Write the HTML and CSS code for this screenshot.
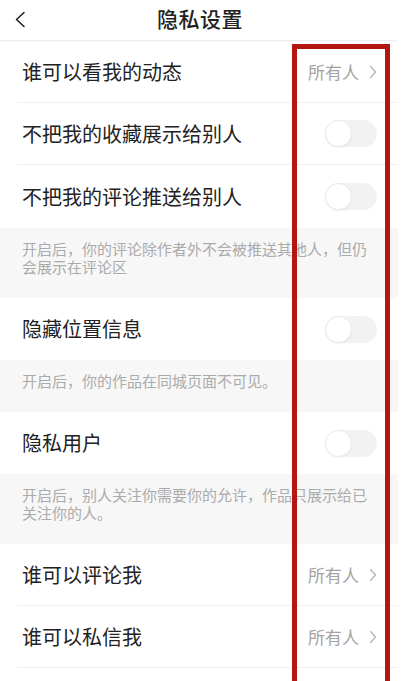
FILE: index.html
```html
<!DOCTYPE html>
<html lang="zh-CN">
<head>
<meta charset="utf-8">
<title>隐私设置</title>
<link rel="stylesheet" href="styles.css">
</head>
<body>
<div class="page">
  <header class="header">
    <span class="back">
      <svg width="12" height="17" viewBox="0 0 12 17"><polyline points="10,1.5 2.5,8.5 10,15.5" fill="none" stroke="#222" stroke-width="1.6" stroke-linecap="round" stroke-linejoin="round"/></svg>
    </span>
    <h1 class="title">隐私设置</h1>
  </header>

  <div class="row divided">
    <span class="label">谁可以看我的动态</span>
    <span class="value">所有人<svg class="chev" width="8" height="14" viewBox="0 0 8 14"><polyline points="1.5,1.5 6.5,7 1.5,12.5" fill="none" stroke="#b4b4b4" stroke-width="1.3" stroke-linecap="round" stroke-linejoin="round"/></svg></span>
  </div>
  <div class="row divided">
    <span class="label">不把我的收藏展示给别人</span>
    <span class="toggle"><span class="knob"></span></span>
  </div>
  <div class="row tall">
    <span class="label">不把我的评论推送给别人</span>
    <span class="toggle"><span class="knob"></span></span>
  </div>
  <p class="note">开启后，你的评论除作者外不会被推送其他人，但仍会展示在评论区</p>

  <div class="row">
    <span class="label">隐藏位置信息</span>
    <span class="toggle"><span class="knob"></span></span>
  </div>
  <p class="note">开启后，你的作品在同城页面不可见。</p>

  <div class="row">
    <span class="label">隐私用户</span>
    <span class="toggle"><span class="knob"></span></span>
  </div>
  <p class="note">开启后，别人关注你需要你的允许，作品只展示给已关注你的人。</p>

  <div class="row divided">
    <span class="label">谁可以评论我</span>
    <span class="value">所有人<svg class="chev" width="8" height="14" viewBox="0 0 8 14"><polyline points="1.5,1.5 6.5,7 1.5,12.5" fill="none" stroke="#b4b4b4" stroke-width="1.3" stroke-linecap="round" stroke-linejoin="round"/></svg></span>
  </div>
  <div class="row divided">
    <span class="label">谁可以私信我</span>
    <span class="value">所有人<svg class="chev" width="8" height="14" viewBox="0 0 8 14"><polyline points="1.5,1.5 6.5,7 1.5,12.5" fill="none" stroke="#b4b4b4" stroke-width="1.3" stroke-linecap="round" stroke-linejoin="round"/></svg></span>
  </div>

  <div class="highlight"></div>
</div>
</body>
</html>
```

FILE: styles.css
```css
* { box-sizing: border-box; }
html, body {
  margin: 0;
  padding: 0;
  background: #fff;
}
body {
  font-family: "Noto Sans CJK SC", "Noto Sans", "Liberation Sans", sans-serif;
  color: #222;
}
.page {
  position: relative;
  width: 398px;
  height: 681px;
  overflow: hidden;
  background: #fff;
}
.header {
  height: 41px;
  display: flex;
  align-items: center;
  justify-content: center;
  position: relative;
  border-bottom: 1px solid #f0f0f0;
  box-shadow: 0 1px 2px rgba(0,0,0,0.03);
}
.back {
  position: absolute;
  left: 14px;
  top: 11px;
  display: flex;
}
.title {
  margin: 0;
  font-size: 21px;
  font-weight: 500;
  color: #222;
  line-height: 1;
  margin-top: -4px;
  margin-left: 2px;
  letter-spacing: 0.5px;
}
.row {
  height: 62px;
  margin-left: 17px;
  padding: 0 21px 0 5px;
  display: flex;
  align-items: center;
  justify-content: space-between;
}
.row.divided { border-bottom: 1px solid #f0f0f0; }
.row.tall { height: 63px; }
.label {
  font-size: 20px;
  line-height: 1;
  color: #222;
}
.value {
  display: flex;
  align-items: center;
  gap: 10px;
  font-size: 17px;
  color: #a3a3a3;
  line-height: 1;
}
.chev { display: block; }
.toggle {
  width: 52px;
  height: 27px;
  border-radius: 14px;
  background: #f2f2f2;
  position: relative;
  display: block;
}
.knob {
  position: absolute;
  left: 0;
  top: 0;
  width: 27px;
  height: 27px;
  border-radius: 50%;
  background: #fff;
  border: 1px solid #ebebeb;
  box-shadow: 0 1px 2px rgba(0,0,0,0.05);
}
.note {
  margin: 0;
  background: #f7f7f7;
  padding: 12px 22px 22px 22px;
  font-size: 15px;
  line-height: 18px;
  color: #ababab;
}
.highlight {
  position: absolute;
  left: 292px;
  top: 44px;
  width: 98px;
  bottom: -20px;
  border: 5px solid #b3170f;
}
```
